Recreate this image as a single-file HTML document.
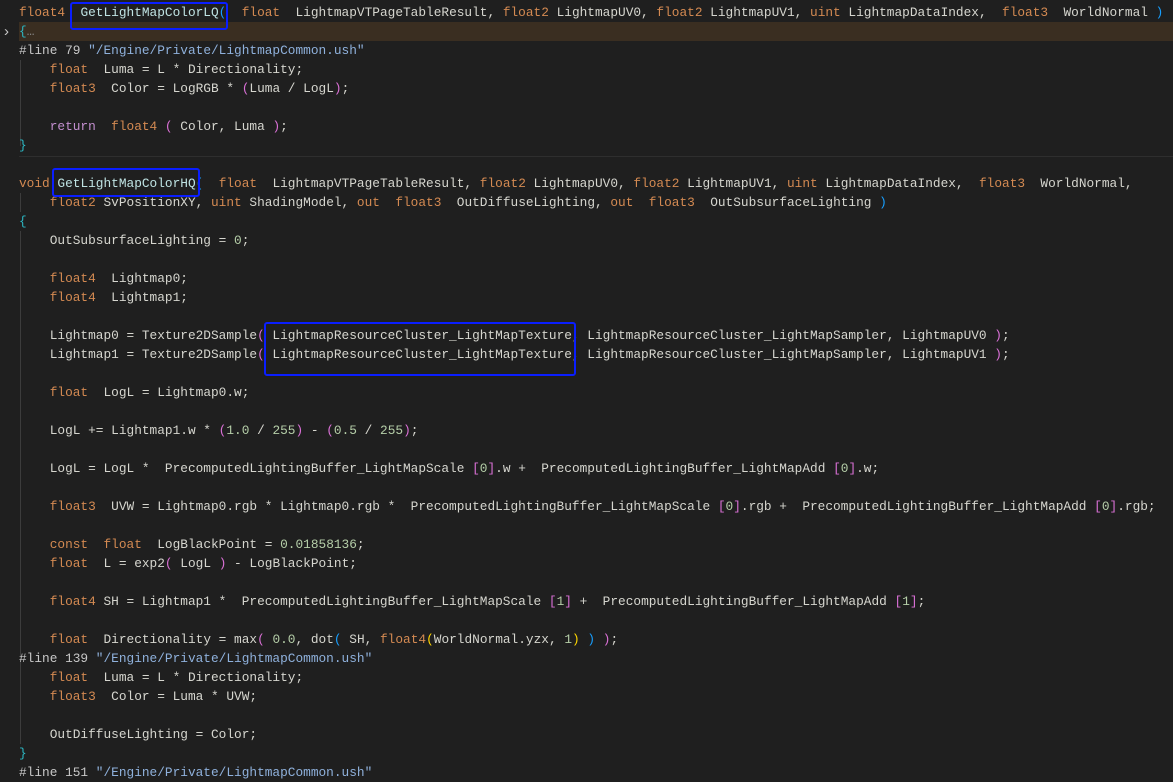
<!DOCTYPE html>
<html><head><meta charset="utf-8"><style>
html,body{margin:0;padding:0;background:#1f1f1f;width:1173px;height:770px;overflow:hidden}
.c{position:absolute;left:19px;top:3px;font-family:"Liberation Mono",monospace;font-size:12.8px;line-height:19px;color:#d6d6cf}
.l{height:19px;white-space:pre}
.t{color:#d48a52}.f{color:#bfe3e3}.k{color:#c38fcf}.n{color:#b5cea8}.s{color:#8fb1dc}.p{color:#c8c8c8}
.pk{color:#da70d6}.bl{color:#179fff}.gd{color:#ffd700}.cy{color:#2cb8c4}
.box{position:absolute;border:2px solid #0a1eff;border-radius:3px}
.g{position:absolute;left:20px;width:1px;background:#3c3c3c}
</style></head><body>
<div style="position:absolute;left:19px;top:22px;width:1154px;height:19px;background:#3a2e21"></div>
<div style="position:absolute;left:19px;top:156px;width:1154px;height:1px;background:#2e2e2e"></div>
<div style="position:absolute;left:4px;top:23px;color:#c8c8c8;font:15px 'Liberation Sans',sans-serif">›</div>
<div class="g" style="top:60px;height:86px"></div>
<div class="g" style="top:193px;height:19px"></div>
<div class="g" style="top:231px;height:513px"></div>
<div class="c">
<div class="l"><span class="t">float4</span>  <span class="f">GetLightMapColorLQ</span><span class="bl">(</span>  <span class="t">float</span>  LightmapVTPageTableResult, <span class="t">float2</span> LightmapUV0, <span class="t">float2</span> LightmapUV1, <span class="t">uint</span> LightmapDataIndex,  <span class="t">float3</span>  WorldNormal <span class="bl">)</span></div>
<div class="l"><span class="cy">{</span><span style="color:#888">…</span></div>
<div class="l"><span class="p">#line 79 </span><span class="s">"/Engine/Private/LightmapCommon.ush"</span></div>
<div class="l">    <span class="t">float</span>  Luma = L * Directionality;</div>
<div class="l">    <span class="t">float3</span>  Color = LogRGB * <span class="pk">(</span>Luma / LogL<span class="pk">)</span>;</div>
<div class="l"> </div>
<div class="l">    <span class="k">return</span>  <span class="t">float4</span> <span class="pk">(</span> Color, Luma <span class="pk">)</span>;</div>
<div class="l"><span class="cy">}</span></div>
<div class="l"> </div>
<div class="l"><span class="t">void</span> <span class="f">GetLightMapColorHQ</span><span class="bl">(</span>  <span class="t">float</span>  LightmapVTPageTableResult, <span class="t">float2</span> LightmapUV0, <span class="t">float2</span> LightmapUV1, <span class="t">uint</span> LightmapDataIndex,  <span class="t">float3</span>  WorldNormal,</div>
<div class="l">    <span class="t">float2</span> SvPositionXY, <span class="t">uint</span> ShadingModel, <span class="t">out</span>  <span class="t">float3</span>  OutDiffuseLighting, <span class="t">out</span>  <span class="t">float3</span>  OutSubsurfaceLighting <span class="bl">)</span></div>
<div class="l"><span class="cy">{</span></div>
<div class="l">    OutSubsurfaceLighting = <span class="n">0</span>;</div>
<div class="l"> </div>
<div class="l">    <span class="t">float4</span>  Lightmap0;</div>
<div class="l">    <span class="t">float4</span>  Lightmap1;</div>
<div class="l"> </div>
<div class="l">    Lightmap0 = Texture2DSample<span class="pk">(</span> LightmapResourceCluster_LightMapTexture, LightmapResourceCluster_LightMapSampler, LightmapUV0 <span class="pk">)</span>;</div>
<div class="l">    Lightmap1 = Texture2DSample<span class="pk">(</span> LightmapResourceCluster_LightMapTexture, LightmapResourceCluster_LightMapSampler, LightmapUV1 <span class="pk">)</span>;</div>
<div class="l"> </div>
<div class="l">    <span class="t">float</span>  LogL = Lightmap0.w;</div>
<div class="l"> </div>
<div class="l">    LogL += Lightmap1.w * <span class="pk">(</span><span class="n">1.0</span> / <span class="n">255</span><span class="pk">)</span> - <span class="pk">(</span><span class="n">0.5</span> / <span class="n">255</span><span class="pk">)</span>;</div>
<div class="l"> </div>
<div class="l">    LogL = LogL *  PrecomputedLightingBuffer_LightMapScale <span class="pk">[</span><span class="n">0</span><span class="pk">]</span>.w +  PrecomputedLightingBuffer_LightMapAdd <span class="pk">[</span><span class="n">0</span><span class="pk">]</span>.w;</div>
<div class="l"> </div>
<div class="l">    <span class="t">float3</span>  UVW = Lightmap0.rgb * Lightmap0.rgb *  PrecomputedLightingBuffer_LightMapScale <span class="pk">[</span><span class="n">0</span><span class="pk">]</span>.rgb +  PrecomputedLightingBuffer_LightMapAdd <span class="pk">[</span><span class="n">0</span><span class="pk">]</span>.rgb;</div>
<div class="l"> </div>
<div class="l">    <span class="t">const</span>  <span class="t">float</span>  LogBlackPoint = <span class="n">0.01858136</span>;</div>
<div class="l">    <span class="t">float</span>  L = exp2<span class="pk">(</span> LogL <span class="pk">)</span> - LogBlackPoint;</div>
<div class="l"> </div>
<div class="l">    <span class="t">float4</span> SH = Lightmap1 *  PrecomputedLightingBuffer_LightMapScale <span class="pk">[</span><span class="n">1</span><span class="pk">]</span> +  PrecomputedLightingBuffer_LightMapAdd <span class="pk">[</span><span class="n">1</span><span class="pk">]</span>;</div>
<div class="l"> </div>
<div class="l">    <span class="t">float</span>  Directionality = max<span class="pk">(</span> <span class="n">0.0</span>, dot<span class="bl">(</span> SH, <span class="t">float4</span><span class="gd">(</span>WorldNormal.yzx, <span class="n">1</span><span class="gd">)</span> <span class="bl">)</span> <span class="pk">)</span>;</div>
<div class="l"><span class="p">#line 139 </span><span class="s">"/Engine/Private/LightmapCommon.ush"</span></div>
<div class="l">    <span class="t">float</span>  Luma = L * Directionality;</div>
<div class="l">    <span class="t">float3</span>  Color = Luma * UVW;</div>
<div class="l"> </div>
<div class="l">    OutDiffuseLighting = Color;</div>
<div class="l"><span class="cy">}</span></div>
<div class="l"><span class="p">#line 151 </span><span class="s">"/Engine/Private/LightmapCommon.ush"</span></div>
</div>
<div class="box" style="left:70px;top:2px;width:154px;height:24px"></div>
<div class="box" style="left:52px;top:168px;width:144px;height:25px"></div>
<div class="box" style="left:264px;top:322px;width:308px;height:50px"></div>
</body></html>
